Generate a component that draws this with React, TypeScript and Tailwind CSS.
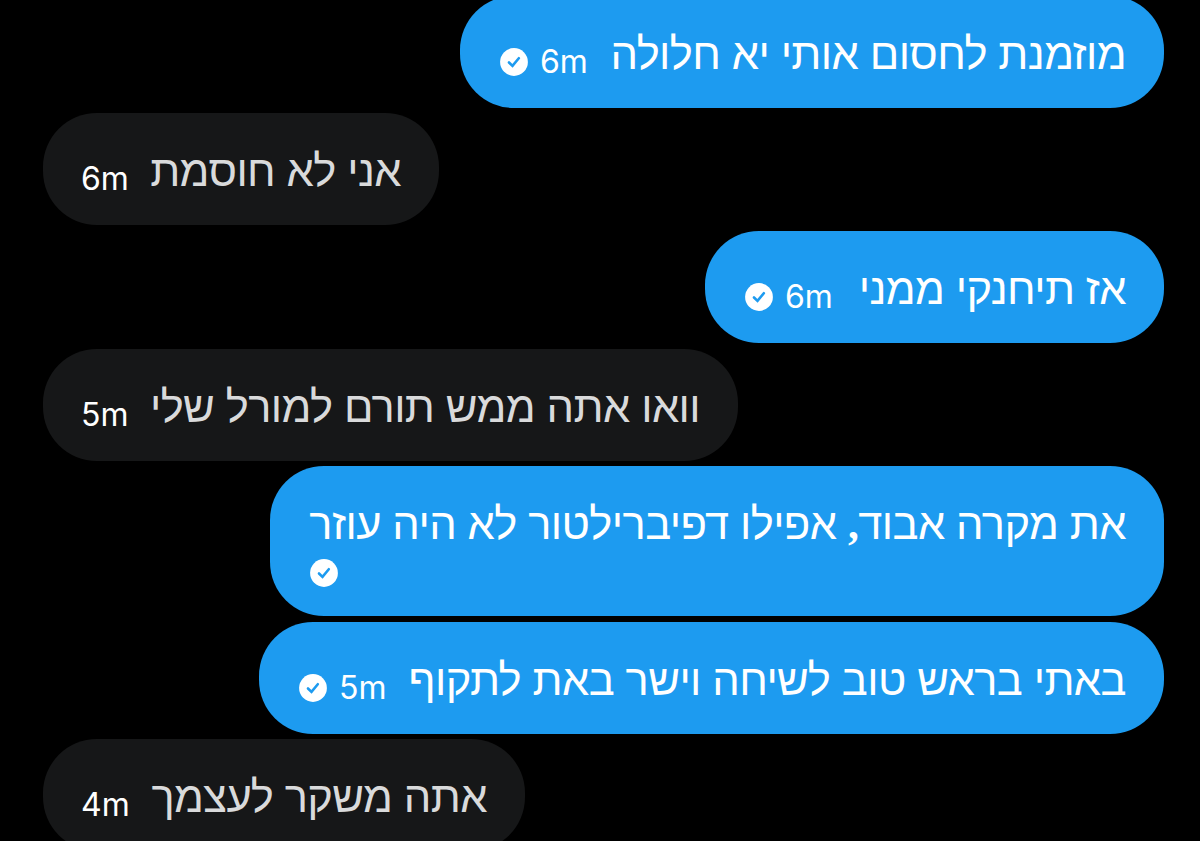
import React from 'react';

interface Message {
  id: number;
  text: React.ReactNode;
  time?: string;
  sent: boolean;
  width: string;
}

const messages: Message[] = [
  { id: 1, text: 'מוזמנת לחסום אותי יא חלולה', time: '6m', sent: true, width: 'w-[704px]' },
  { id: 2, text: 'אני לא חוסמת', time: '6m', sent: false, width: 'w-[396px]' },
  { id: 3, text: 'אז תיחנקי ממני', time: '6m', sent: true, width: 'w-[459px]' },
  { id: 4, text: 'וואו אתה ממש תורם למורל שלי', time: '5m', sent: false, width: 'w-[695px]' },
  {
    id: 5,
    text: (
      <>
        את מקרה אבוד<span className="font-['Liberation_Serif',serif] font-bold">,</span> אפילו דפיברילטור לא היה עוזר
      </>
    ),
    sent: true,
    width: 'w-[894px]',
  },
  { id: 6, text: 'באתי בראש טוב לשיחה וישר באת לתקוף', time: '5m', sent: true, width: 'w-[905px]' },
  { id: 7, text: 'אתה משקר לעצמך', time: '4m', sent: false, width: 'w-[482px]' },
];

const SentIcon = () => (
  <svg viewBox="0 0 28 28" className="ml-0.5 size-7 shrink-0">
    <circle cx="14" cy="14" r="13.9" fill="#fff" />
    <path
      d="M9 14.5l3.5 3.4 6.3-7.7"
      fill="none"
      stroke="#1d9bf0"
      strokeWidth="2.6"
      strokeLinecap="round"
    />
  </svg>
);

const MessageText = ({ message }: { message: Message }) => (
  <p
    dir="rtl"
    className={`text-[43.5px] leading-14 tracking-[-0.6px] whitespace-nowrap ${
      message.sent ? 'text-white' : 'text-[#d9dadb]'
    }`}
  >
    {message.text}
  </p>
);

const MessageBubble = ({ message }: { message: Message }) => {
  const color = message.sent ? 'self-end bg-[#1d9bf0]' : 'self-start bg-[#161718]';

  // Without a timestamp the sent mark wraps onto its own line
  if (!message.time) {
    return (
      <div className={`flex h-[150px] shrink-0 flex-col gap-[7px] rounded-[54px] px-[38px] pt-[30px] ${message.width} ${color}`}>
        <MessageText message={message} />
        <SentIcon />
      </div>
    );
  }

  return (
    <div className={`flex h-28 shrink-0 justify-between rounded-[54px] px-[38px] pt-[30px] first:-mt-[4.2px] ${message.width} ${color}`}>
      <div className="flex h-14 items-center gap-3 pt-4 font-['Inter',sans-serif] text-[32px] text-white">
        {message.sent && <SentIcon />}
        <span>{message.time}</span>
      </div>
      <MessageText message={message} />
    </div>
  );
};

export default function App() {
  return (
    <main className="flex h-[841px] flex-col gap-[5.6px] overflow-hidden bg-black pr-9 pl-[43px] font-['Liberation_Sans',sans-serif]">
      {messages.map((message) => (
        <MessageBubble key={message.id} message={message} />
      ))}
    </main>
  );
}
